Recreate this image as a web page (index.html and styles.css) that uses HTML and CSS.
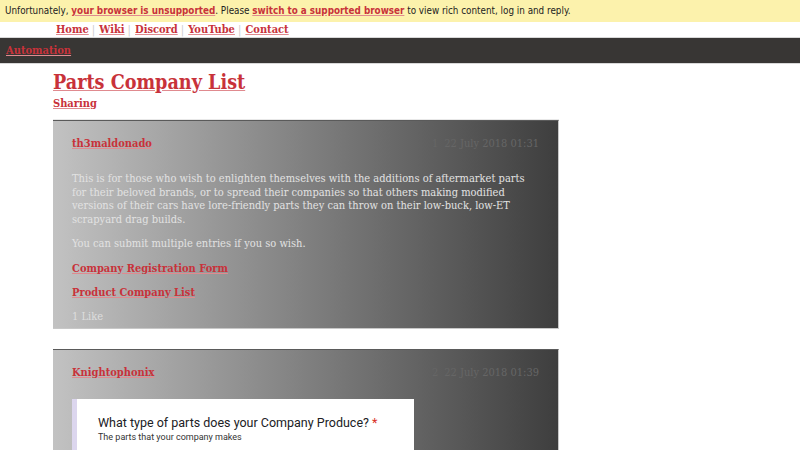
FILE: index.html
```html
<!DOCTYPE html>
<html lang="en">
<head>
    <meta charset="UTF-8">
    <meta name="viewport" content="width=device-width, initial-scale=1.0">
    <title>Parts Company List - Automation</title>
    <link rel="stylesheet" href="styles.css">
</head>
<body>
    <div class="browser-notice">
        Unfortunately, <a href="#">your browser is unsupported</a>. Please <a href="#">switch to a supported browser</a> to view rich content, log in and reply.
    </div>

    <nav class="site-nav">
        <a href="#">Home</a><span class="sep">|</span>
        <a href="#">Wiki</a><span class="sep">|</span>
        <a href="#">Discord</a><span class="sep">|</span>
        <a href="#">YouTube</a><span class="sep">|</span>
        <a href="#">Contact</a>
    </nav>

    <header class="forum-header">
        <a href="#">Automation</a>
    </header>

    <main class="topic">
        <h1 class="topic-title"><a href="#">Parts Company List</a></h1>
        <a class="topic-category" href="#">Sharing</a>

        <div class="posts">
            <article class="post">
                <div class="post-meta">
                    <a class="post-author" href="#">th3maldonado</a>
                    <span class="post-date"><span class="post-num">1</span>22 July 2018 01:31</span>
                </div>
                <div class="post-body">
                    <p>This is for those who wish to enlighten themselves with the additions of aftermarket parts for their beloved brands, or to spread their companies so that others making modified versions of their cars have lore-friendly parts they can throw on their low-buck, low-ET scrapyard drag builds.</p>
                    <p>You can submit multiple entries if you so wish.</p>
                    <p><a href="#">Company Registration Form</a></p>
                    <p><a href="#">Product Company List</a></p>
                </div>
                <div class="post-likes">1 Like</div>
            </article>

            <article class="post">
                <div class="post-meta">
                    <a class="post-author" href="#">Knightophonix</a>
                    <span class="post-date"><span class="post-num">2</span>22 July 2018 01:39</span>
                </div>
                <div class="post-body">
                    <div class="form-shot">
                        <div class="form-question">What type of parts does your Company Produce? <span class="req">*</span></div>
                        <div class="form-help">The parts that your company makes</div>
                    </div>
                </div>
            </article>
        </div>
    </main>
</body>
</html>
```

FILE: styles.css
```css
body {
    margin: 0;
    padding: 0;
    font-family: "DejaVu Serif", serif;
    font-stretch: condensed;
    font-size: 11px;
    background-color: #fff;
    color: #222;
}

a {
    color: #c8323a;
    font-weight: bold;
    text-decoration: underline;
    text-decoration-color: #e08a8f;
}

.browser-notice {
    background-color: #fcf2ac;
    font-family: "DejaVu Sans", sans-serif;
    font-stretch: condensed;
    font-size: 9.8px;
    padding: 4px 5px;
    height: 14px;
    line-height: 14px;
    color: #222;
}

.site-nav {
    padding: 0 0 0 56px;
    height: 15px;
    line-height: 15px;
    font-size: 11px;
}

.site-nav .sep {
    color: #ccc;
    margin: 0 1px 0 3px;
}

.forum-header {
    background-color: #383634;
    border-top: 1px solid #d8d8d8;
    border-bottom: 1px solid #d8d8d8;
    height: 25px;
    line-height: 25px;
    padding: 0 6px;
}

.topic {
    padding: 0 0 0 53px;
    width: 506px;
}

.topic-title {
    margin: 6px 0 0;
    font-size: 19.6px;
    line-height: 25px;
}

.topic-category {
    display: inline-block;
    margin-top: 2px;
    line-height: 14px;
}

.posts {
    border-top: 1px solid #e8e8e8;
    margin-top: 8px;
}

.post {
    background: linear-gradient(to right, #c2c2c2, #3e3e3e);
    border-top: 1px solid #5a5a5a;
    border-right: 1px solid #c8c8c8;
    border-bottom: 1px solid #c8c8c8;
    padding: 16px 19px 4px 19px;
    margin-bottom: 20px;
}

.post-meta {
    display: flex;
    justify-content: space-between;
    line-height: 14px;
}

.post-date {
    color: #666;
}

.post-num {
    margin-right: 6px;
}

.post-body {
    margin-top: 21px;
    color: #e2e2e2;
    line-height: 13.7px;
}

.post-body p {
    margin: 0 0 10.5px;
}

.post-likes {
    color: #dedede;
    line-height: 14px;
    margin-top: 10px;
}

.form-shot {
    background-color: #fff;
    border-left: 5px solid #dcd6ee;
    width: 316px;
    margin-top: -2px;
    padding: 16px 0 0 21px;
    height: 60px;
    font-family: Roboto, sans-serif;
    font-stretch: normal;
    color: #202124;
}

.form-question {
    font-size: 12.5px;
    line-height: 15px;
}

.req {
    color: #d93025;
}

.form-help {
    font-size: 9px;
    margin-top: 1px;
    color: #333;
}
```
